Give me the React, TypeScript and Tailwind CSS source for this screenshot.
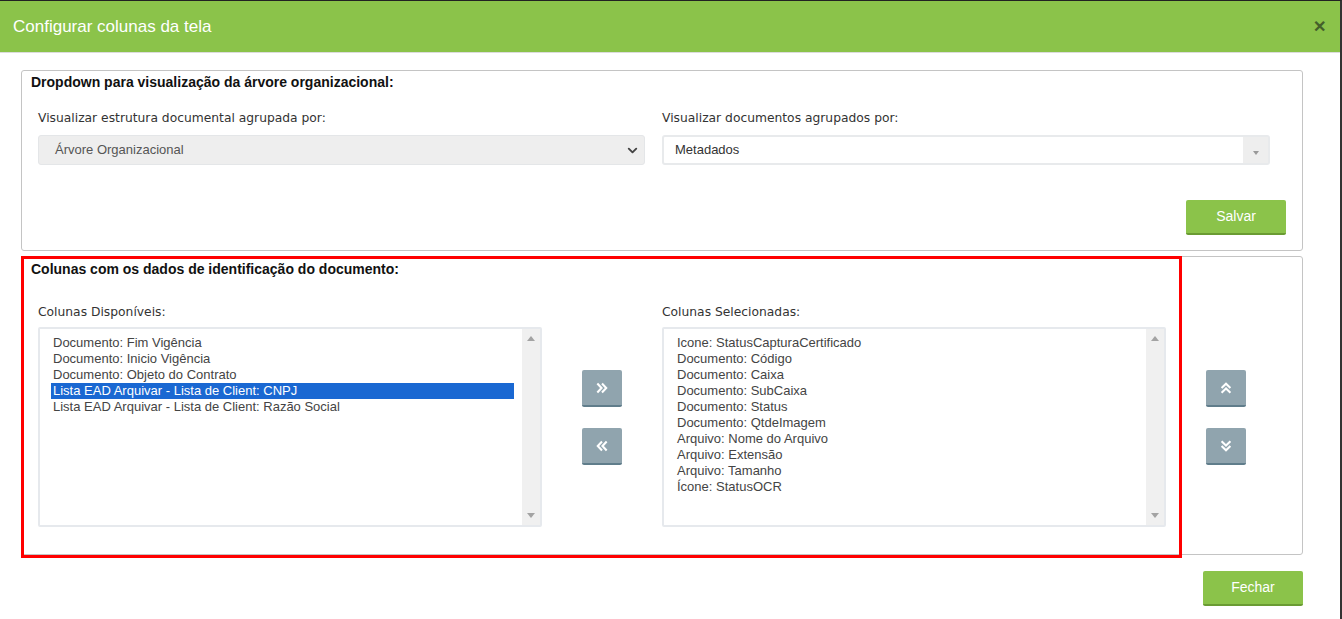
import { ChevronDown } from 'lucide-react'

const DISPONIVEIS = [
  'Documento: Fim Vigência',
  'Documento: Inicio Vigência',
  'Documento: Objeto do Contrato',
  'Lista EAD Arquivar - Lista de Client: CNPJ',
  'Lista EAD Arquivar - Lista de Client: Razão Social',
]

const SELECIONADAS = [
  'Icone: StatusCapturaCertificado',
  'Documento: Código',
  'Documento: Caixa',
  'Documento: SubCaixa',
  'Documento: Status',
  'Documento: QtdeImagem',
  'Arquivo: Nome do Arquivo',
  'Arquivo: Extensão',
  'Arquivo: Tamanho',
  'Ícone: StatusOCR',
]

const arial = { fontFamily: '"Liberation Sans", Arial, sans-serif' }
const dejavu = { fontFamily: '"DejaVu Sans", Verdana, sans-serif' }

function Chevrons({ dir }: { dir: 'right' | 'left' | 'up' | 'down' }) {
  const rot = { right: 0, left: 180, up: -90, down: 90 }[dir]
  return (
    <svg width="14" height="14" viewBox="0 0 12 12" style={{ transform: `rotate(${rot}deg)` }}>
      <path d="M2 2.2 L5.6 6 L2 9.8 M6 2.2 L9.6 6 L6 9.8" fill="none" stroke="white" strokeWidth="1.8" />
    </svg>
  )
}

function GrayButton({ dir }: { dir: 'right' | 'left' | 'up' | 'down' }) {
  return (
    <button className="w-[40px] h-[37px] bg-[#90a4ae] border-b-2 border-[#607d8b] rounded-[2px] flex items-center justify-center">
      <Chevrons dir={dir} />
    </button>
  )
}

function ListBox({ items, selected }: { items: string[]; selected?: number }) {
  return (
    <div className="w-[504px] h-[200px] border-2 border-[#e6e9ed] rounded-[2px] flex bg-white" style={arial}>
      <div className="flex-1 pt-[6px] pl-[11px] pr-[8px]">
        {items.map((it, i) => (
          <div
            key={i}
            className={
              i === selected
                ? 'h-[16px] leading-[16px] text-[13px] bg-[#1a68d2] text-white pl-[2px]'
                : 'h-[16px] leading-[16px] text-[13px] text-[#444] pl-[2px]'
            }
          >
            {it}
          </div>
        ))}
      </div>
      <div className="w-[18px] bg-[#f0f0f0] flex flex-col items-center justify-between py-[7px]">
        <svg width="8" height="5" viewBox="0 0 8 5">
          <path d="M0 5 L4 0 L8 5 Z" fill="#a3a3a3" />
        </svg>
        <svg width="8" height="5" viewBox="0 0 8 5">
          <path d="M0 0 L4 5 L8 0 Z" fill="#a3a3a3" />
        </svg>
      </div>
    </div>
  )
}

export default function App() {
  return (
    <div className="w-[1342px] h-[619px] bg-white relative overflow-hidden border-t border-[#222] border-r-2 border-r-[#333]">
      <div className="h-[52px] bg-[#8bc34a] flex items-center justify-between pl-[13px] pr-[14px] border-b border-[#dcdcdc]" style={arial}>
        <span className="text-white text-[17px]">Configurar colunas da tela</span>
        <span className="text-[#44602a] text-[16px] font-bold leading-none">✕</span>
      </div>

      <div className="pl-[21px] pt-[17px]">
        {/* dropdowns */}
        <div className="w-[1282px] h-[181px] border border-[#c4c4c4] rounded-[3px] pl-[16px] pr-[16px] pt-[3px]">
          <div className="text-[14px] font-bold text-[#111] leading-[16px] ml-[-7px]" style={arial}>
            Dropdown para visualização da árvore organizacional:
          </div>
          <div className="flex gap-[17px] mt-[20px]">
            <div className="w-[607px]">
              <div className="text-[12.3px] text-[#333] leading-[16px]" style={dejavu}>
                Visualizar estrutura documental agrupada por:
              </div>
              <div className="mt-[9px] h-[30px] bg-[#eeeeee] border border-[#e4e6e8] rounded-[3px] flex items-center justify-between pl-[16px] pr-[4px]" style={arial}>
                <span className="text-[13px] text-[#555]">Árvore Organizacional</span>
                <ChevronDown size={15} strokeWidth={3} color="#444" />
              </div>
            </div>
            <div className="w-[608px]">
              <div className="text-[12.3px] text-[#333] leading-[16px]" style={dejavu}>
                Visualizar documentos agrupados por:
              </div>
              <div className="mt-[9px] h-[30px] bg-white border-2 border-[#e8eaec] rounded-[3px] flex items-stretch" style={arial}>
                <span className="flex-1 text-[13px] text-[#333] pl-[11px] flex items-center">Metadados</span>
                <span className="w-[25px] bg-[#eeeeee] flex items-center justify-center pt-[6px]">
                  <svg width="6" height="4" viewBox="0 0 6 4">
                    <path d="M0 0 L3 4 L6 0 Z" fill="#999" />
                  </svg>
                </span>
              </div>
            </div>
          </div>
          <div className="flex justify-end mt-[35px]">
            <button className="w-[100px] h-[35px] bg-[#8bc34a] border-b-2 border-[#6a9b33] rounded-[2px] text-white text-[14px]" style={arial}>
              Salvar
            </button>
          </div>
        </div>

        {/* colunas */}
        <div className="mt-[5px] w-[1282px] h-[299px] border border-[#c4c4c4] rounded-[3px] pl-[16px] pt-[3px]">
          <div className="text-[14px] font-bold text-[#111] leading-[16px] ml-[-7px] mt-[1px]" style={arial}>
            Colunas com os dados de identificação do documento:
          </div>
          <div className="flex mt-[27px]">
            <div>
              <div className="text-[12.3px] text-[#333] leading-[16px]" style={dejavu}>
                Colunas Disponíveis:
              </div>
              <div className="mt-[7px]">
                <ListBox items={DISPONIVEIS} selected={3} />
              </div>
            </div>
            <div className="w-[120px] flex flex-col items-center gap-[21px] pt-[66px]">
              <GrayButton dir="right" />
              <GrayButton dir="left" />
            </div>
            <div>
              <div className="text-[12.3px] text-[#333] leading-[16px]" style={dejavu}>
                Colunas Selecionadas:
              </div>
              <div className="mt-[7px]">
                <ListBox items={SELECIONADAS} />
              </div>
            </div>
            <div className="w-[120px] flex flex-col items-center gap-[21px] pt-[66px]">
              <GrayButton dir="up" />
              <GrayButton dir="down" />
            </div>
          </div>
        </div>

        <div className="w-[1282px] flex justify-end mt-[16px]">
          <button className="w-[100px] h-[35px] bg-[#8bc34a] border-b-2 border-[#6a9b33] rounded-[2px] text-white text-[14px]" style={arial}>
            Fechar
          </button>
        </div>
      </div>

      {/* red highlight annotation */}
      <div className="absolute left-[21px] top-[255px] w-[1161px] h-[302px] border-[3px] border-[#ff0000] pointer-events-none" />
    </div>
  )
}
